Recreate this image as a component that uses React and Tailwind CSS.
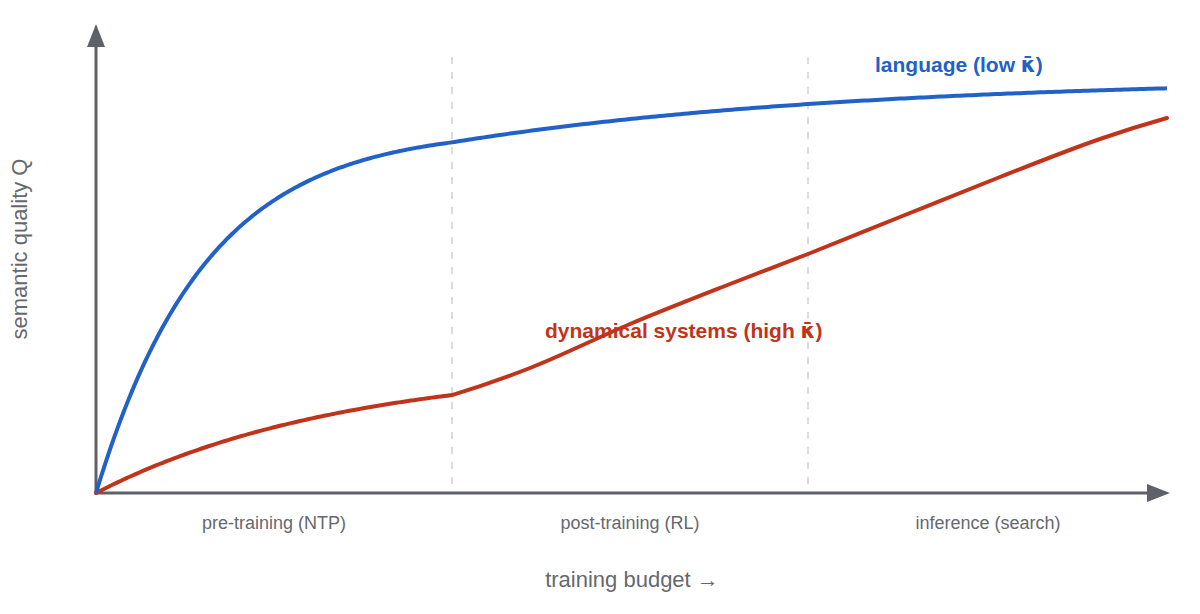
import React from "react";

const FONT = '"Liberation Sans", Arial, Helvetica, sans-serif';
const MARK_FONT = '"DejaVu Sans", "Liberation Sans", sans-serif';

function fnPath(f, x0, x1, step = 2) {
  const pts = [];
  for (let x = x0; x <= x1; x += step) pts.push([x, f(x)]);
  if (pts[pts.length - 1][0] !== x1) pts.push([x1, f(x1)]);
  return pts;
}

function hermite(P, m0, mN) {
  const n = P.length;
  const sec = [];
  for (let i = 0; i < n - 1; i++) sec.push((P[i + 1][1] - P[i][1]) / (P[i + 1][0] - P[i][0]));
  const m = P.map((_, i) => {
    if (i === 0) return m0;
    if (i === n - 1) return mN;
    return (sec[i - 1] + sec[i]) / 2;
  });
  let d = "";
  for (let i = 0; i < n - 1; i++) {
    const dx = P[i + 1][0] - P[i][0];
    const c1 = [P[i][0] + dx / 3, P[i][1] + (m[i] * dx) / 3];
    const c2 = [P[i + 1][0] - dx / 3, P[i + 1][1] - (m[i + 1] * dx) / 3];
    d += ` C ${c1[0].toFixed(2)} ${c1[1].toFixed(2)} ${c2[0].toFixed(2)} ${c2[1].toFixed(2)} ${P[i + 1][0].toFixed(2)} ${P[i + 1][1].toFixed(2)}`;
  }
  return d;
}

function toPoly(pts) {
  return pts.map((p, i) => `${i === 0 ? "M" : "L"} ${p[0].toFixed(2)} ${p[1].toFixed(2)}`).join(" ");
}

const blue1 = fnPath((x) => 493 - 365 * (1 - Math.exp(-(x - 96) / 110)), 96, 452);
const yb = blue1[blue1.length - 1][1];
const blue2 = fnPath((x) => yb - 64.9 * (1 - Math.exp(-(x - 452) / 400)), 452, 1167, 4);
const bluePath = toPoly([...blue1, ...blue2.slice(1)]);

const red1 = fnPath((x) => 493 - 129 * (1 - Math.exp(-(x - 96) / 250)), 96, 452, 3);
const yr = red1[red1.length - 1][1];
const red2Pts = [
  [452, yr],
  [530, 368],
  [630, 324],
  [730, 284],
  [808, 254],
  [900, 217],
  [1000, 177],
  [1100, 139],
  [1167, 118],
];
const redPath = toPoly(red1) + hermite(red2Pts, -0.3, -0.28);

const BLUE = "#2262c7";
const RED = "#c1341c";
const AXIS = "#5e6168";
const TEXT = "#66686e";

export default function App() {
  return (
    <div className="w-[1200px] h-[614px] bg-white overflow-hidden">
      <svg width="1200" height="614" viewBox="0 0 1200 614" className="block">
        {/* dashed phase separators */}
        <line x1="452" y1="57" x2="452" y2="494" stroke="#dcdcde" strokeWidth="2" strokeDasharray="7 8" />
        <line x1="808" y1="57" x2="808" y2="494" stroke="#dcdcde" strokeWidth="2" strokeDasharray="7 8" />

        {/* axes */}
        <line x1="96" y1="494" x2="96" y2="44" stroke={AXIS} strokeWidth="3" />
        <polygon points="96,24 87,47 105,47" fill={AXIS} />
        <line x1="95" y1="493" x2="1150" y2="493" stroke={AXIS} strokeWidth="3" />
        <polygon points="1170,493 1147,484 1147,502" fill={AXIS} />

        {/* curves */}
        <path d={redPath} fill="none" stroke={RED} strokeWidth="4" strokeLinejoin="round" strokeLinecap="round" />
        <path d={bluePath} fill="none" stroke={BLUE} strokeWidth="4" strokeLinejoin="round" strokeLinecap="butt" />

        {/* series labels */}
        <text x="875" y="72" fill={BLUE} fontFamily={FONT} fontWeight="700" fontSize="21">
          language (low <tspan fontFamily={MARK_FONT}>κ̄</tspan>)
        </text>
        <text x="545" y="338" fill={RED} fontFamily={FONT} fontWeight="700" fontSize="21">
          dynamical systems (high <tspan fontFamily={MARK_FONT}>κ̄</tspan>)
        </text>

        {/* phase labels */}
        <text x="274" y="529" fill={TEXT} fontFamily={FONT} fontSize="18" textAnchor="middle">
          pre-training (NTP)
        </text>
        <text x="630" y="529" fill={TEXT} fontFamily={FONT} fontSize="18" textAnchor="middle">
          post-training (RL)
        </text>
        <text x="988" y="529" fill={TEXT} fontFamily={FONT} fontSize="18" textAnchor="middle">
          inference (search)
        </text>

        {/* axis titles */}
        <text x="632" y="587" fill={TEXT} fontFamily={FONT} fontSize="22" textAnchor="middle">
          training budget →
        </text>
        <text
          x="0"
          y="0"
          transform="translate(27 249) rotate(-90)"
          fill={TEXT}
          fontFamily={FONT}
          fontSize="22"
          textAnchor="middle"
        >
          semantic quality Q
        </text>
      </svg>
    </div>
  );
}
